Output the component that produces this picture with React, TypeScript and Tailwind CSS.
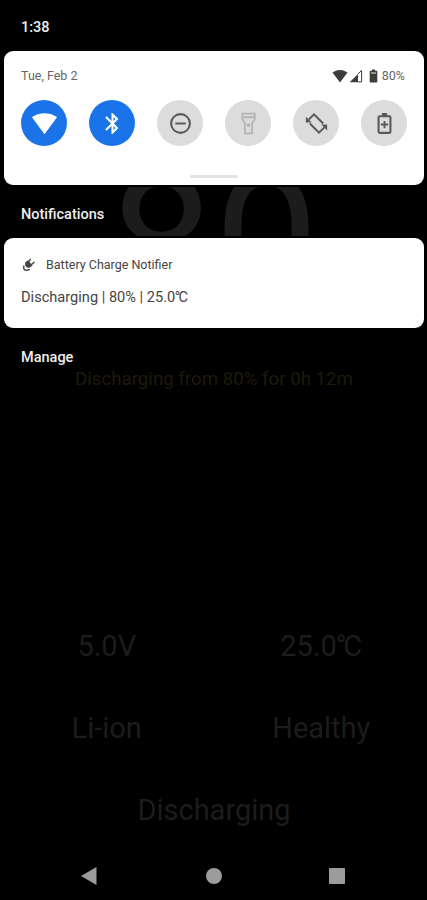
import React from 'react';

interface Tile {
  id: string;
  active?: boolean;
  faded?: boolean;
  icon: React.ReactNode;
}

const tiles: Tile[] = [
  {
    id: 'wifi',
    active: true,
    icon: <path d="M12 22.400 24 6C23 5.300 18.800 2.200 12 2.200S1 5.300 0 6z" />
  },
  {
    id: 'bluetooth',
    active: true,
    icon: (
      <path d="M17.71 7.71 12 2h-1v7.59L6.41 5 5 6.41 10.59 12 5 17.59 6.41 19 11 14.41V22h1l5.71-5.71-4.3-4.29 4.3-4.29zM13 5.83l1.88 1.88L13 9.59V5.83zm1.88 10.46L13 18.17v-3.76l1.88 1.88z" />
    )
  },
  {
    id: 'dnd',
    icon: (
      <path d="M7 11v2h10v-2zM12 2a10 10 0 1 0 0 20 10 10 0 0 0 0-20zm0 18a8 8 0 1 1 0-16 8 8 0 0 1 0 16z" />
    )
  },
  {
    id: 'flashlight',
    faded: true,
    icon: (
      <g fill="none" stroke="currentColor" strokeWidth="1.7">
        <path d="M6 2.5h12V8l-2.5 3.5v10h-7v-10L6 8zM6 6h12" />
        <circle cx="12" cy="13.5" r="1" />
      </g>
    )
  },
  {
    id: 'rotate',
    icon: (
      <g>
        <path
          d="M4.500 8.300 9.600 3.200 18.400 12M19.500 15.700 14.400 20.800 5.600 12"
          fill="none"
          stroke="currentColor"
          strokeWidth="1.900"
        />
        <path d="M1.800 5.400V11H7.400zM22.200 18.600V13H16.600z" />
      </g>
    )
  },
  {
    id: 'saver',
    icon: (
      <g>
        <path
          d="M7.300 5h9.400q1 0 1 1v14q0 1-1 1H7.300q-1 0-1-1V6q0-1 1-1z"
          fill="none"
          stroke="currentColor"
          strokeWidth="2"
        />
        <path d="M9.500 2h5v3h-5zM11.100 9.500h1.800v2.600h2.600v1.800h-2.600v2.600h-1.800v-2.600H8.500v-1.800h2.600z" />
      </g>
    )
  }
];

// Roboto has no single-glyph celsius sign, so it is set as a tight pair
function Celsius({ value }: { value: string }) {
  return (
    <>
      {value}
      <span className="-ml-[0.04em] tracking-[-0.11em]">°</span>C
    </>
  );
}

function QuickTile({ tile }: { tile: Tile }) {
  const colors = tile.active
    ? 'bg-[#1a73e8] text-white'
    : tile.faded
      ? 'bg-[#dcdcdc] text-[#b4b4b4]'
      : 'bg-[#dcdcdc] text-[#5a5a5a]';

  return (
    <div className={`flex size-[46px] items-center justify-center rounded-full ${colors}`}>
      <svg viewBox="0 0 24 24" className="size-[25px]" fill="currentColor">
        {tile.icon}
      </svg>
    </div>
  );
}

function StatusIcons() {
  return (
    <div className="flex items-center text-[#3c3c3c]">
      <svg viewBox="0 0 16 14" className="h-[14px] w-4" fill="currentColor">
        <path d="M8 13.500 15.500 3.600C14.800 3 12.100.9 8 .9S1.200 3 .5 3.600z" />
      </svg>
      <svg viewBox="0 0 14 14" className="ml-px h-[14px] w-[14px]">
        <path d="M.7 13.300H9V5z" fill="currentColor" />
        <path d="M9 5 12.600 1.400V12.900H9" fill="none" stroke="currentColor" strokeWidth="1" />
      </svg>
      <svg viewBox="0 0 9 14" className="ml-[6px] h-[14px] w-[9px]" fill="currentColor">
        <path d="M3 .4h3v1.400h1.500q.8 0 .8.8v10.200q0 .8-.8.8h-6q-.8 0-.8-.8V2.600q0-.8.8-.8H3z" />
        <path d="M2 3.200h5v1.600H2z" fill="#aaa" />
      </svg>
      <span className="ml-[4px] text-[12.500px] text-[#666]">80%</span>
    </div>
  );
}

function BatteryScreen() {
  return (
    <div className="flex h-full flex-col items-center text-[#1c1c1c]">
      <div className="mt-[134px] h-[219px] pl-px text-[187px] leading-[219px]">80</div>
      <p className="mt-[15px] pl-px text-[18.700px] leading-[22px] text-[#1d1b08]">
        Discharging from 80% for 0h 12m
      </p>
      <div className="mt-[215px] w-full text-[29px] leading-[82px]">
        <div className="grid grid-cols-2 text-center">
          <span>5.0V</span>
          <span className="pl-[2px]">
            <Celsius value="25.0" />
          </span>
          <span>Li-ion</span>
          <span className="pl-[2px]">Healthy</span>
        </div>
        <p className="pl-px text-center">Discharging</p>
      </div>
    </div>
  );
}

function NotificationShade() {
  return (
    <div className="absolute inset-0 flex flex-col pl-[4px] pr-[3px]">
      <div className="h-[51px] pl-[17px] pt-[16.500px] text-[14.500px] font-medium leading-[22px] text-[#eee]">
        1:38
      </div>

      <section className="flex h-[133.500px] flex-col rounded-[9px] bg-white px-[17px] pt-[17px] shadow-[0_0_0_2px_#000]">
        <div className="flex h-4 items-center justify-between pr-[2px]">
          <span className="pt-px text-[12.500px] text-[#666]">Tue, Feb 2</span>
          <StatusIcons />
        </div>
        <div className="mt-[16px] flex justify-between">
          {tiles.map((tile) => (
            <QuickTile key={tile.id} tile={tile} />
          ))}
        </div>
        <div className="mt-[29px] h-[3px] w-12 self-center rounded-full bg-[#e2e2e2]" />
      </section>

      <h2 className="h-[53.500px] pl-[17px] pt-[19px] text-[14.500px] font-medium leading-[22px] text-[#eee]">
        Notifications
      </h2>

      <section className="h-[89.500px] rounded-[9px] bg-white px-[17px] pt-[19px] text-[#444] shadow-[0_0_0_2px_#000]">
        <div className="flex h-4 items-center gap-[9px]">
          <svg viewBox="0 0 16 16" className="size-4 text-[#444]" fill="currentColor">
            <path d="M4.300 5.200 7.100 3.200l4.400 5.200-2.600 2q-2.600.9-4-.9T4.300 5.200z" />
            <path
              d="M7.400 4.800 9.800 1.900M10.300 7.700 13.400 5M3 8.500Q1.800 13.300 5.200 13.200T8.600 12"
              fill="none"
              stroke="currentColor"
              strokeWidth="1.400"
            />
          </svg>
          <span className="text-[12.500px]">Battery Charge Notifier</span>
        </div>
        <p className="mt-[13px] text-[14.600px] leading-[22px]">
          Discharging | 80% | <Celsius value="25.0" />
        </p>
      </section>

      <p className="pl-[17px] pt-[19px] text-[14.500px] font-medium leading-[22px] text-[#eee]">
        Manage
      </p>
    </div>
  );
}

function NavBar() {
  return (
    <div className="absolute inset-x-0 bottom-0 flex h-[49px] items-center justify-center bg-black pr-[2px] text-[#9b9b9b]">
      <svg viewBox="0 0 16 18" className="h-[18px] w-4" fill="currentColor">
        <path d="M0 9 15.500 0v18z" />
      </svg>
      <div className="ml-[109px] size-4 rounded-full bg-current" />
      <div className="ml-[107px] size-4 rounded-[1px] bg-current" />
    </div>
  );
}

export default function App() {
  return (
    <main className="relative h-[900px] w-[427px] overflow-hidden bg-black font-[Roboto,sans-serif]">
      <BatteryScreen />
      <NotificationShade />
      <NavBar />
    </main>
  );
}
